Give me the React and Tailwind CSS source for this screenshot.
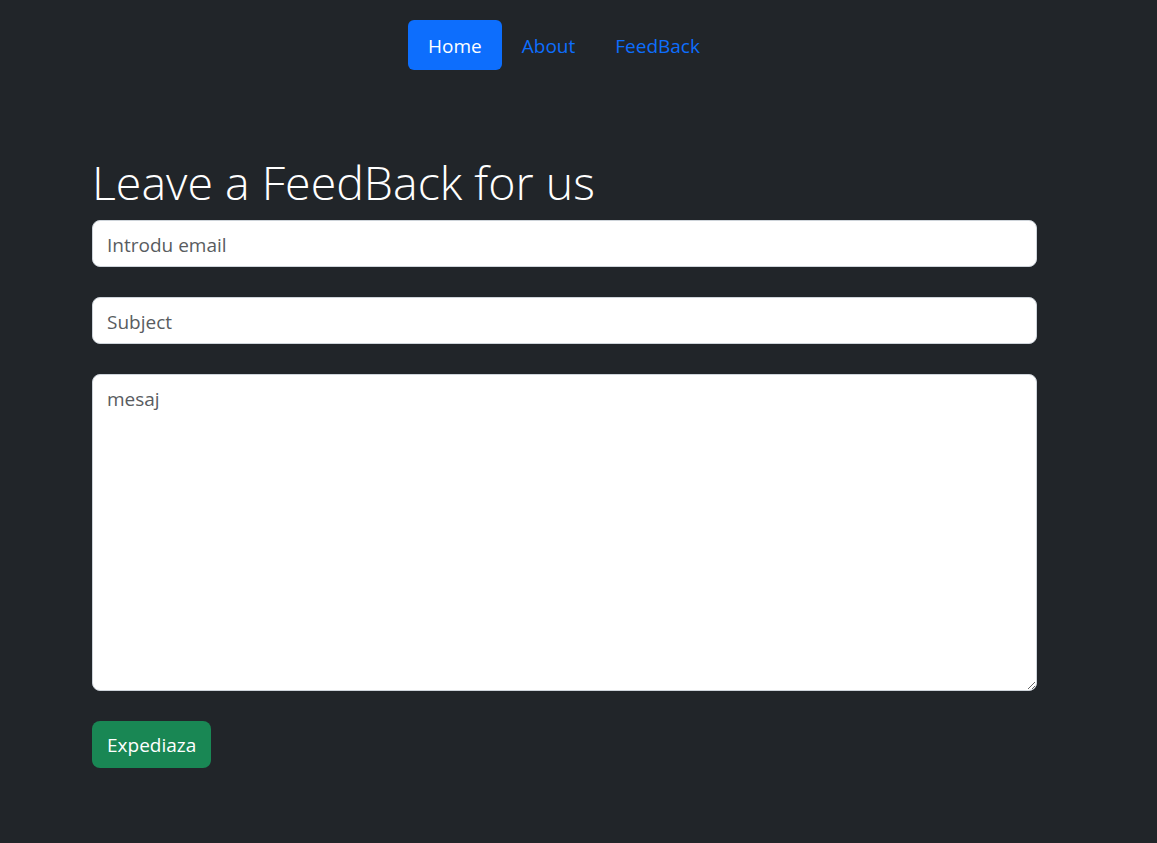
export default function App() {
  const font = { fontFamily: '"Open Sans", "Noto Sans", sans-serif' };
  const field =
    "h-[47px] w-full rounded-[8px] border border-[#ced4da] bg-white pl-[14px] pr-4 pt-[2px] text-[19px] text-[#212529] outline-none placeholder:text-[#595c5f]";
  return (
    <div className="min-h-[843px] w-full bg-[#212529]" style={font}>
      <nav className="flex justify-center pt-5">
        <div className="flex ml-[-29px]">
          <a className="flex h-[50px] items-center rounded-[6px] bg-[#0d6efd] px-5 pt-[2px] text-[19px] text-white">Home</a>
          <a className="flex h-[50px] items-center px-5 pt-[2px] text-[19px] text-[#0d6efd]">About</a>
          <a className="flex h-[50px] items-center px-5 pt-[2px] text-[19px] text-[#0d6efd]">FeedBack</a>
        </div>
      </nav>
      <main className="ml-[92px] w-[945px] pt-[83px]">
        <h1 className="mb-[9px] text-[46.5px] font-light leading-[58px] text-white">Leave a FeedBack for us</h1>
        <div className="flex flex-col gap-[30px]">
          <input className={field} placeholder="Introdu email" />
          <input className={field} placeholder="Subject" />
          <textarea
            className="h-[317px] w-full rounded-[8px] border border-[#ced4da] bg-white py-[10px] pl-[14px] pr-4 text-[19px] text-[#212529] outline-none placeholder:text-[#595c5f]"
            placeholder="mesaj"
          />
          <div>
            <button className="h-[47px] rounded-[8px] bg-[#198754] px-[15px] pt-[2px] text-[19px] text-white">Expediaza</button>
          </div>
        </div>
      </main>
    </div>
  );
}
